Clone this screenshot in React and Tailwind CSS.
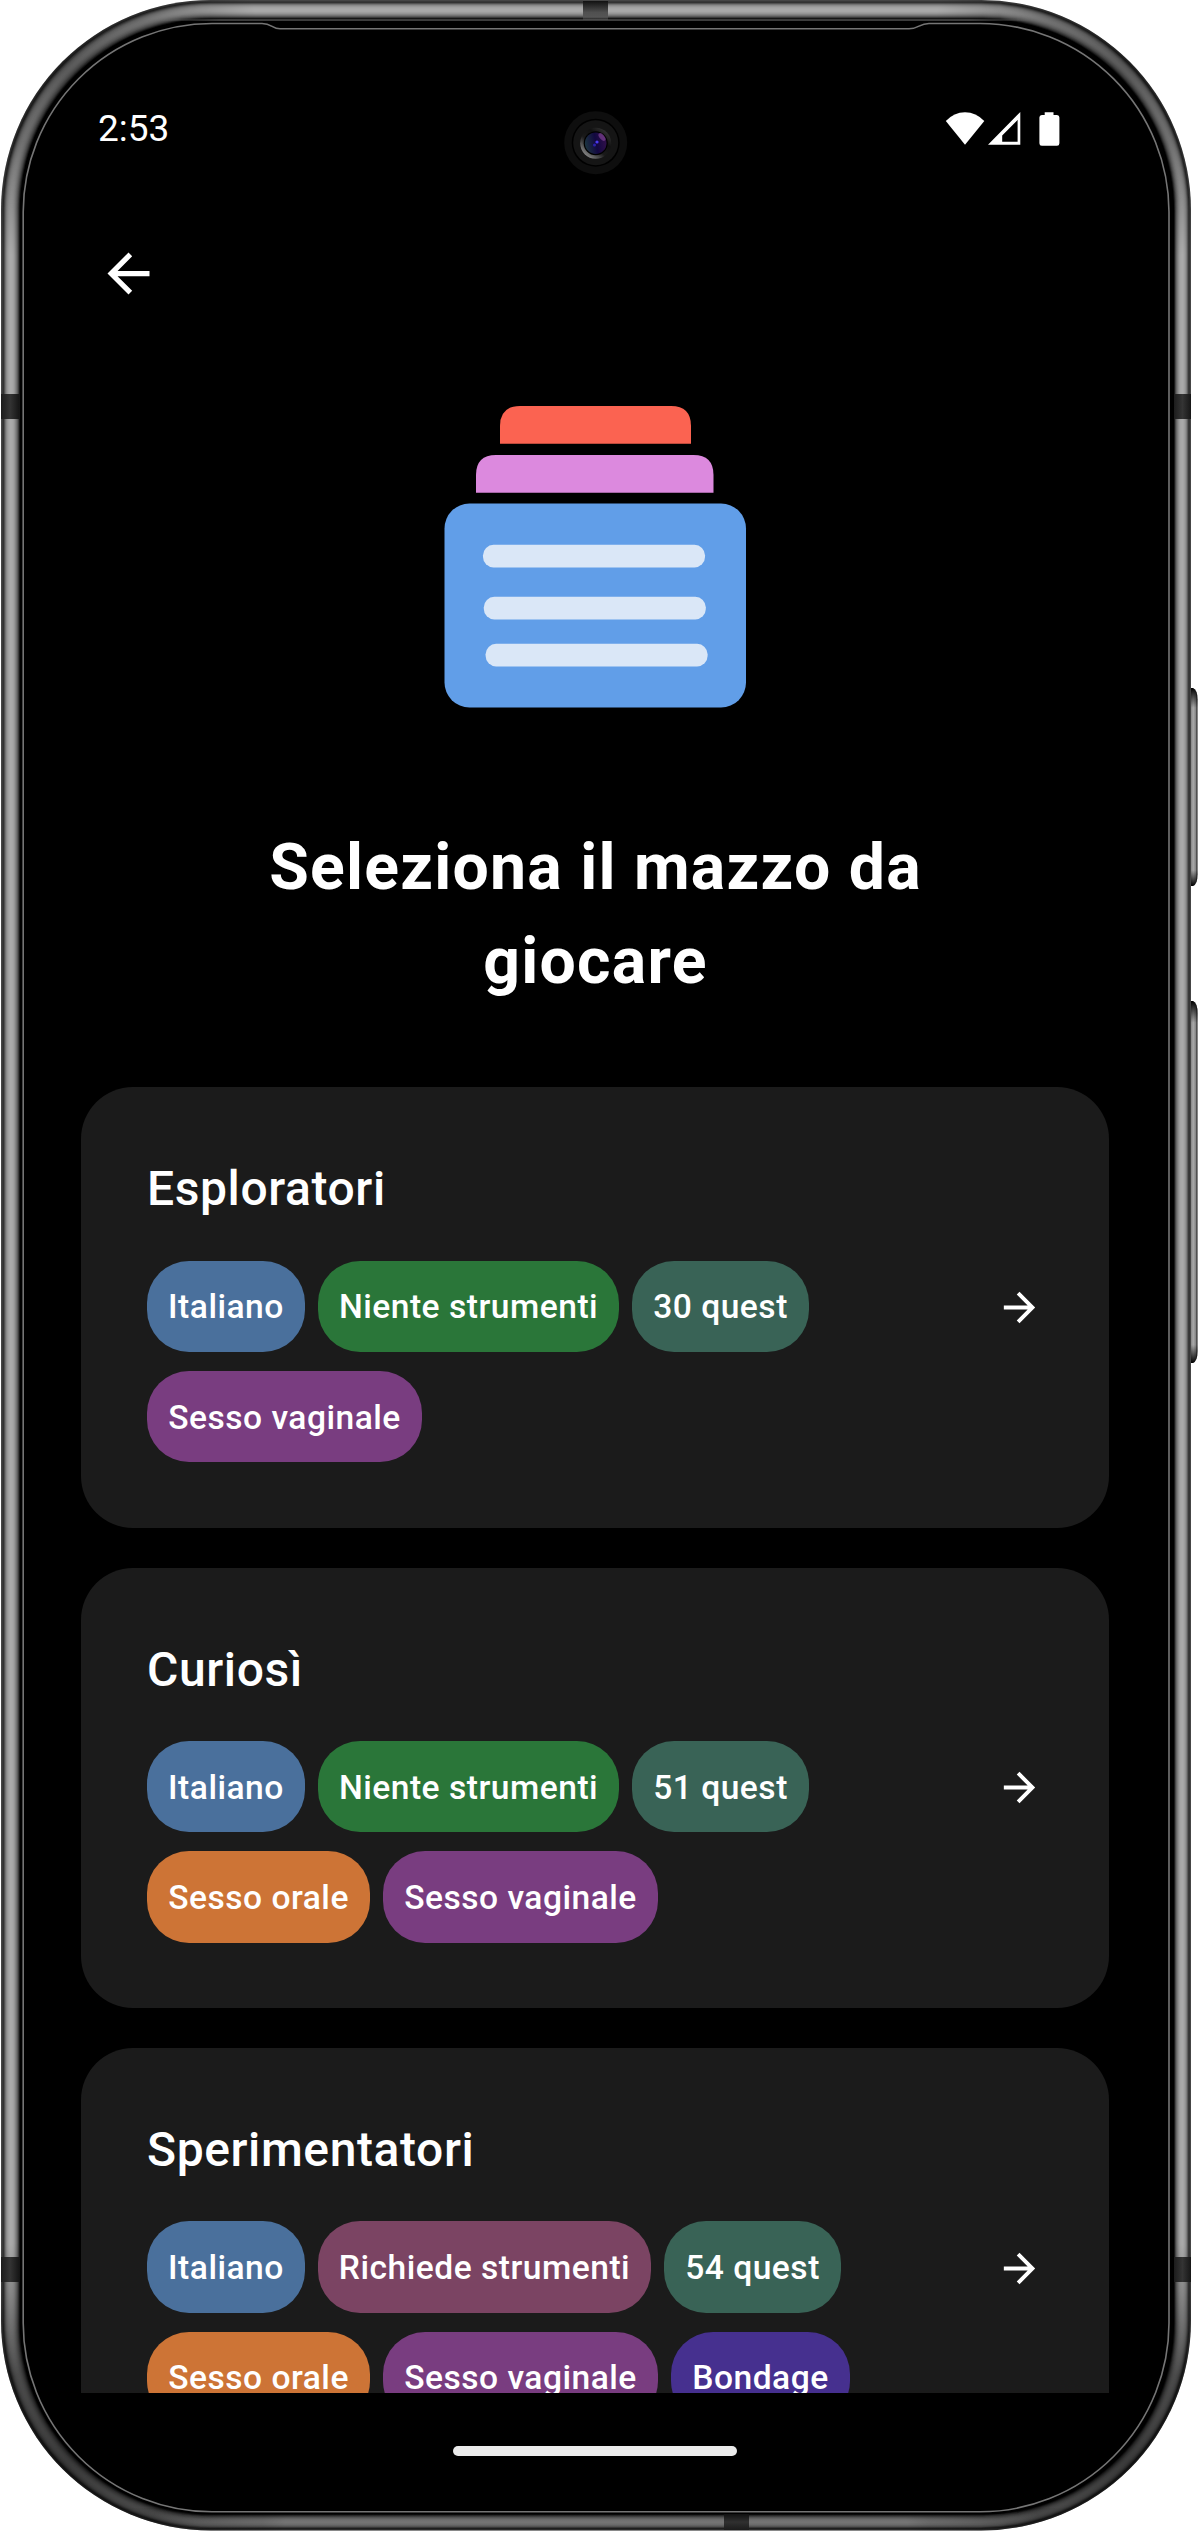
const tones = {
  blue: "bg-[#4a709c]",
  green: "bg-[#2a7639]",
  teal: "bg-[#396356]",
  purple: "bg-[#793d80]",
  orange: "bg-[#cd7436]",
  plum: "bg-[#7b4463]",
  indigo: "bg-[#46308f]",
};

const decks = [
  {
    name: "Esploratori",
    rows: [
      [["Italiano", "blue", "w-[158px]"], ["Niente strumenti", "green", "w-[301px]"], ["30 quest", "teal", "w-[177px]"]],
      [["Sesso vaginale", "purple", "w-[275px]"]],
    ],
  },
  {
    name: "Curiosì",
    rows: [
      [["Italiano", "blue", "w-[158px]"], ["Niente strumenti", "green", "w-[301px]"], ["51 quest", "teal", "w-[177px]"]],
      [["Sesso orale", "orange", "w-[223px]"], ["Sesso vaginale", "purple", "w-[275px]"]],
    ],
  },
  {
    name: "Sperimentatori",
    rows: [
      [["Italiano", "blue", "w-[158px]"], ["Richiede strumenti", "plum", "w-[333px]"], ["54 quest", "teal", "w-[177px]"]],
      [["Sesso orale", "orange", "w-[223px]"], ["Sesso vaginale", "purple", "w-[275px]"], ["Bondage", "indigo", "w-[179px]"]],
    ],
  },
];

const rings = [
  [0.8, "#3c3c3c"], [1.8, "#2c2c2c"], [2.8, "#4a4a4a"], [3.8, "#6c6c6c"], [4.8, "#868686"], [5.8, "#969696"],
  [6.8, "#a0a0a0"], [7.8, "#a6a6a6"], [8.8, "#aaaaaa"], [9.8, "#aaaaaa"], [10.8, "#a8a8a8"], [11.8, "#a2a2a2"],
  [12.8, "#989898"], [13.8, "#8a8a8a"], [14.8, "#787878"], [15.8, "#626262"], [16.8, "#444"], [17.8, "#1e1e1e"], [18.8, "#000"],
];

function Hardware() {
  return (
    <svg className="absolute inset-0" width="1198" height="2531" viewBox="0 0 1198 2531" fill="none">
      <defs>
        <linearGradient id="key" x1="0" x2="1" y1="0" y2="0">
          <stop offset="0" stopColor="#666" />
          <stop offset="0.5" stopColor="#aaa" />
          <stop offset="0.78" stopColor="#888" />
          <stop offset="1" stopColor="#111" />
        </linearGradient>
        <linearGradient id="keyEnds1" x1="0" x2="0" y1="0" y2="1">
          <stop offset="0" stopColor="#000" />
          <stop offset="0.1" stopColor="#000" stopOpacity="0" />
          <stop offset="0.92" stopColor="#000" stopOpacity="0" />
          <stop offset="1" stopColor="#000" />
        </linearGradient>
        <linearGradient id="keyEnds2" x1="0" x2="0" y1="0" y2="1">
          <stop offset="0" stopColor="#000" />
          <stop offset="0.06" stopColor="#000" stopOpacity="0" />
          <stop offset="0.95" stopColor="#000" stopOpacity="0" />
          <stop offset="1" stopColor="#000" />
        </linearGradient>
        <linearGradient id="lip" gradientUnits="userSpaceOnUse" x1="150" x2="1042" y1="0" y2="0">
          <stop offset="0" stopColor="#777" stopOpacity="0" />
          <stop offset="0.08" stopColor="#777" />
          <stop offset="0.92" stopColor="#777" />
          <stop offset="1" stopColor="#777" stopOpacity="0" />
        </linearGradient>
        <linearGradient id="foot" x1="0" x2="1" y1="0" y2="0">
          <stop offset="0" stopColor="#000" stopOpacity="0" />
          <stop offset="0.15" stopColor="#000" stopOpacity="0.32" />
          <stop offset="0.85" stopColor="#000" stopOpacity="0.32" />
          <stop offset="1" stopColor="#000" stopOpacity="0" />
        </linearGradient>
        <radialGradient id="shade">
          <stop offset="0" stopColor="#000" stopOpacity="0.48" />
          <stop offset="0.45" stopColor="#000" stopOpacity="0.34" />
          <stop offset="1" stopColor="#000" stopOpacity="0" />
        </radialGradient>
        <radialGradient id="shadeLow">
          <stop offset="0" stopColor="#000" stopOpacity="0.66" />
          <stop offset="0.45" stopColor="#000" stopOpacity="0.56" />
          <stop offset="1" stopColor="#000" stopOpacity="0" />
        </radialGradient>
        <linearGradient id="band" x1="0" x2="0" y1="0" y2="1">
          <stop offset="0" stopColor="#111" />
          <stop offset="0.6" stopColor="#505050" />
          <stop offset="0.85" stopColor="#555" />
          <stop offset="1" stopColor="#151515" />
        </linearGradient>
        <linearGradient id="bandLow" x1="0" x2="0" y1="0" y2="1">
          <stop offset="0" stopColor="#101010" />
          <stop offset="0.5" stopColor="#303030" />
          <stop offset="1" stopColor="#1c1c1c" />
        </linearGradient>
        <linearGradient id="sideL" x1="0" x2="1" y1="0" y2="0">
          <stop offset="0" stopColor="#1c1c1c" />
          <stop offset="0.5" stopColor="#343434" />
          <stop offset="1" stopColor="#161616" />
        </linearGradient>
        <clipPath id="body"><rect x="1" y="0" width="1190" height="2530.5" rx="210" /></clipPath>
      </defs>
      <path d="M1189 698V680H1193Q1197.5 682 1197.5 692V874Q1197.5 884 1193 886H1189Z" fill="url(#key)" transform="matrix(1 0 0 0.961 0 34.5)" />
      <path d="M1189 698V680H1193Q1197.5 682 1197.5 692V874Q1197.5 884 1193 886H1189Z" fill="url(#keyEnds1)" transform="matrix(1 0 0 0.961 0 34.5)" />
      <path d="M1189 1011V1001H1193Q1197.5 1003 1197.5 1013V1351Q1197.5 1361 1193 1363H1189Z" fill="url(#key)" />
      <path d="M1189 1011V1001H1193Q1197.5 1003 1197.5 1013V1351Q1197.5 1361 1193 1363H1189Z" fill="url(#keyEnds2)" />
      <rect x="1" y="0" width="1190" height="2530.5" rx="210" fill="#4a4a4a" />
      {rings.map(([o, c]) => (
        <rect key={o} x={1 + o} y={o} width={1190 - 1.9 * o} height={2530.5 - 1.85 * o} rx={210 - o} fill={c} />
      ))}
      <g clipPath="url(#body)">
        <circle cx="62" cy="62" r="200" fill="url(#shade)" />
        <circle cx="1130" cy="62" r="200" fill="url(#shade)" />
        <circle cx="62" cy="2468" r="230" fill="url(#shadeLow)" />
        <circle cx="1130" cy="2468" r="230" fill="url(#shadeLow)" />
        <rect x="120" y="2508" width="952" height="23" fill="url(#foot)" />
      </g>
      <rect x="583" y="1" width="25" height="19" fill="url(#band)" />
      <rect x="724" y="2514" width="25" height="16" fill="url(#bandLow)" />
      <rect x="1" y="394" width="18" height="25" fill="url(#sideL)" />
      <rect x="1174" y="394" width="17" height="25" fill="url(#sideL)" />
      <rect x="1" y="2257" width="18" height="25" fill="url(#sideL)" />
      <rect x="1174" y="2257" width="17" height="25" fill="url(#sideL)" />
      <rect x="20.5" y="20.5" width="1152" height="2493" rx="190" fill="#000" />
      <path d="M150 20H1042" stroke="url(#lip)" clipPath="url(#body)" />
      <path
        d="M280 28.8C272 28.8 272 23.5 262 23.5H212A189 189 0 0 0 23.2 212V2323A189 189 0 0 0 212 2511.8H980A189 189 0 0 0 1169 2323V212A189 189 0 0 0 980 23.5H929C919 23.5 919 28.8 909 28.8Z"
        stroke="#757575"
        strokeWidth="1.6"
      />
    </svg>
  );
}

function Camera() {
  return (
    <svg className="absolute top-[111px] left-[564px]" width="64" height="64" viewBox="0 0 64 64">
      <defs>
        <linearGradient id="rim" x1="0.15" y1="0.9" x2="0.85" y2="0.1">
          <stop offset="0" stopColor="#8a8a8a" />
          <stop offset="0.4" stopColor="#1a1a1a" />
          <stop offset="0.7" stopColor="#111" />
          <stop offset="1" stopColor="#333" />
        </linearGradient>
        <linearGradient id="lens" x1="0" y1="0.5" x2="1" y2="0.3">
          <stop offset="0" stopColor="#1c3440" />
          <stop offset="0.5" stopColor="#120840" />
          <stop offset="1" stopColor="#32104a" />
        </linearGradient>
      </defs>
      <circle cx="31.7" cy="31.7" r="31.5" fill="#0e0e0e" />
      <circle cx="31.7" cy="31.7" r="24" fill="#000" />
      <circle cx="31.7" cy="31.7" r="22.5" fill="#151515" />
      <circle cx="31.7" cy="32.2" r="15.5" fill="url(#rim)" />
      <circle cx="31.7" cy="32.2" r="12" fill="#000" />
      <circle cx="31.7" cy="32.2" r="10.8" fill="url(#lens)" />
      <ellipse cx="38" cy="26" rx="2.4" ry="4.6" transform="rotate(-40 38 26)" fill="#8b4a9c" fillOpacity="0.6" />
      <circle cx="33" cy="31" r="1.6" fill="#4a3bf0" />
      <circle cx="30.5" cy="34" r="1.5" fill="#2b20a8" />
    </svg>
  );
}

function Arrow({ className }) {
  return (
    <svg className={className} viewBox="0 0 24 24" fill="#fff">
      <path d="M12 4l-1.41 1.41L16.17 11H4v2h12.17l-5.58 5.59L12 20l8-8z" />
    </svg>
  );
}

function StatusBar() {
  return (
    <header className="flex h-[64px] items-center justify-between pr-[131px] pl-[98px]">
      <span className="pt-[2px] text-[37px] leading-[64px]">2:53</span>
      <svg width="116" height="36" viewBox="0 0 116 36" fill="#fff" className="mt-[2px]">
        <path d="M0.8 10Q9 1.2 20 1.2T39.3 10L20 33.8Z" />
        <path fillRule="evenodd" d="M43 33.7L75.3 1V33.7ZM57.2 30.7H72.6V9L57.2 24.5Z" />
        <path d="M99.7 1.2H108.5V4H112Q114.4 4 114.4 6.5V32.3Q114.4 34.8 112 34.8H96.8Q94.4 34.8 94.4 32.3V6.5Q94.4 4 96.8 4H99.7Z" />
      </svg>
    </header>
  );
}

function DeckArt() {
  return (
    <svg width="303" height="303" viewBox="0 0 303 303" className="mr-[2px] shrink-0">
      <path d="M56 37.7V20Q56 0 76 0H227Q247 0 247 20V37.7Z" fill="#fb6351" />
      <path d="M32 86.7V69Q32 49 52 49H249.5Q269.5 49 269.5 69V86.7Z" fill="#dc89de" />
      <rect x="0.5" y="97.5" width="301.5" height="204" rx="25" fill="#619ee8" />
      <g fill="#dae7f7">
        <rect x="39" y="138.8" width="222" height="22.6" rx="10.5" />
        <rect x="39.8" y="190.8" width="222" height="22.6" rx="10.5" />
        <rect x="41.6" y="237.8" width="222" height="22.6" rx="10.5" />
      </g>
    </svg>
  );
}

function Deck({ name, rows }) {
  return (
    <article className="flex h-[440.6px] shrink-0 items-center rounded-[52px] bg-[#1b1b1b] pr-[66px] pl-[66px]">
      <div className="flex h-full grow flex-col pt-[66px]">
        <h2 className="h-[71px] text-[48px] leading-[71px] font-medium tracking-[0.6px]">{name}</h2>
        <div className="mt-[36.4px] flex flex-col gap-[18.75px]">
          {rows.map((row, i) => (
            <div key={i} className="flex gap-[13px]">
              {row.map(([label, tone, width]) => (
                <span
                  key={label}
                  className={`flex h-[91.5px] items-center justify-center rounded-[42px] pt-[2px] text-[33.6px] leading-[50px] font-medium tracking-[0.5px] whitespace-nowrap ${tones[tone]} ${width}`}
                >
                  {label}
                </span>
              ))}
            </div>
          ))}
        </div>
      </div>
      <Arrow className="size-[47px] shrink-0" />
    </article>
  );
}

export default function App() {
  return (
    <div className="relative h-[2531px] w-[1198px] overflow-hidden bg-white font-['Roboto',sans-serif] text-white">
      <Hardware />
      <Camera />
      <div className="relative flex h-full w-[1192px] flex-col pt-[96px]">
        <StatusBar />
        <nav className="mt-[82px] flex h-[63px] pl-[97px]">
          <Arrow className="size-[63px] rotate-180" />
        </nav>
        <main className="flex h-[2088px] shrink-0 flex-col overflow-hidden pt-[101px]">
          <div className="flex justify-center">
            <DeckArt />
          </div>
          <h1 className="mt-[111px] pr-[1px] text-center text-[64.3px] leading-[94px] font-bold tracking-[1.25px]">
            Seleziona il mazzo da
            <br />
            giocare
          </h1>
          <section className="mt-[79.2px] flex flex-col gap-[39.8px] pr-[83px] pl-[81px]">
            {decks.map((deck) => (
              <Deck key={deck.name} {...deck} />
            ))}
          </section>
        </main>
        <div className="mt-[53px] ml-[453px] h-[10px] w-[284px] shrink-0 rounded-full bg-[#ebebeb]" />
      </div>
    </div>
  );
}
